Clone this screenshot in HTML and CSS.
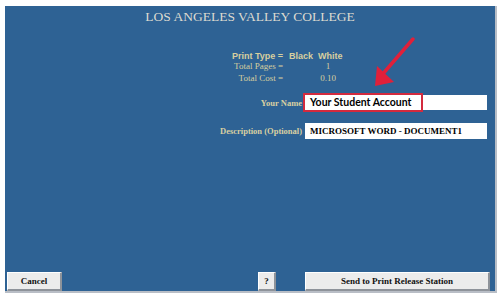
FILE: index.html
```html
<!DOCTYPE html>
<html>
<head>
<meta charset="utf-8">
<link rel="stylesheet" href="styles.css">
</head>
<body>
<div class="panel">
  <h1 class="title">LOS ANGELES VALLEY COLLEGE</h1>
  <div class="info">
    <div class="lbl sans">Print Type =</div><div class="val sans">Black&nbsp; White</div>
    <div class="lbl r2">Total Pages =</div><div class="val center r2">1</div>
    <div class="lbl r3">Total Cost =</div><div class="val center r3">0.10</div>
  </div>
  <div class="form">
    <div class="flabel">Your Name</div>
    <div class="field name"><span class="highlight">Your Student Account</span></div>
    <div class="flabel desc-l">Description (Optional)</div>
    <div class="field desc">MICROSOFT WORD - DOCUMENT1</div>
  </div>
  <div class="buttons">
    <div class="btn cancel">Cancel</div>
    <div class="btn help">?</div>
    <div class="btn send">Send to Print Release Station</div>
  </div>
  <svg class="arrow" width="50" height="55" viewBox="0 0 50 55">
    <line x1="46" y1="3" x2="14" y2="40" stroke="#e0203a" stroke-width="3.5" stroke-linecap="round"/>
    <polygon points="8,50 10,30 27,46" fill="#e0203a"/>
  </svg>
</div>
</body>
</html>
```
FILE: styles.css
```css
html, body {
  margin: 0;
  padding: 0;
  background: #ffffff;
}
.panel {
  position: relative;
  box-sizing: border-box;
  margin: 6px 0 0 5px;
  width: 492px;
  height: 287px;
  background: #2e6294;
  border-right: 2px solid #b9bec6;
  border-bottom: 2px solid #b9bec6;
  display: flex;
  flex-direction: column;
  font-family: "Liberation Serif", serif;
  color: #d7cf9f;
}
.title {
  margin: 0;
  padding-top: 1px;
  height: 20px;
  line-height: 20px;
  font-weight: normal;
  font-size: 13.5px;
  text-align: center;
  color: #dcdad0;
}
.info {
  margin-top: 24px;
  display: grid;
  grid-template-columns: 278px 84px;
  font-size: 9px;
}
.lbl { text-align: right; }
.val { padding-left: 6px; }
.center { text-align: center; padding-left: 0; margin-left: 6px; }
.sans {
  font-family: "Liberation Sans", sans-serif;
  font-weight: bold;
  font-size: 9px;
  line-height: 11px;
}
.r2 { line-height: 9px; }
.r3 { line-height: 12px; padding-top: 1px; }
.form {
  margin-top: 11px;
  display: grid;
  grid-template-columns: 297px 183px;
  column-gap: 2px;
  row-gap: 13px;
  align-items: center;
  font-size: 8.5px;
  font-weight: bold;
}
.flabel { text-align: right; color: #d9d0a2; }
.field {
  position: relative;
  box-sizing: border-box;
  height: 15px;
  background: #ffffff;
  color: #000;
}
.field.desc {
  height: 16px;
  margin-left: 1px;
  padding-left: 5px;
  line-height: 16px;
  font-size: 9px;
  font-family: "Liberation Serif", serif;
}
.highlight {
  position: absolute;
  left: -1px;
  top: -2px;
  width: 120px;
  height: 19px;
  box-sizing: border-box;
  border: 2px solid #d32a3e;
  background: #ffffff;
  padding-left: 5px;
  white-space: nowrap;
  line-height: 15px;
  font-family: Lato, "Liberation Sans", sans-serif;
  font-size: 10.5px;
  font-weight: bold;
  color: #000;
}
.buttons {
  margin-top: auto;
  padding: 0 0 0 2px;
  display: flex;
  height: 19px;
  margin-bottom: 0;
}
.btn {
  box-sizing: border-box;
  height: 19px;
  background: #ececec;
  border-top: 1px solid #ffffff;
  border-left: 1px solid #ffffff;
  border-right: 2px solid #8e939a;
  border-bottom: 2px solid #8e939a;
  color: #111;
  font-size: 9px;
  font-weight: bold;
  text-align: center;
  line-height: 16px;
}
.cancel { width: 55px; }
.help { width: 18px; margin-left: 196px; }
.send { width: 185px; margin-left: 29px; }
.arrow {
  position: absolute;
  left: 362px;
  top: 30px;
}
```
